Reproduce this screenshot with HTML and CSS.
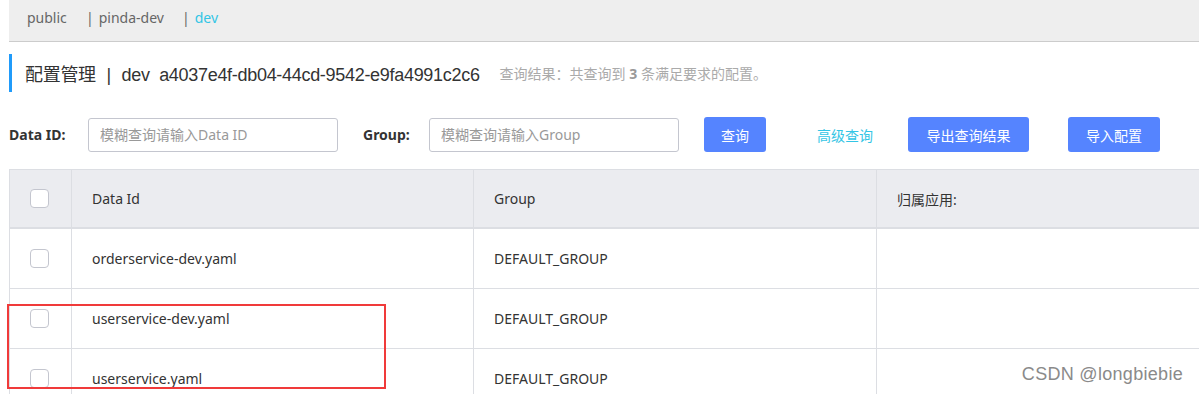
FILE: index.html
```html
<!DOCTYPE html>
<html lang="zh-CN">
<head>
    <meta charset="UTF-8">
    <title>配置管理</title>
    <link rel="stylesheet" href="styles.css">
</head>
<body>
    <div class="page">
        <div class="ns-bar">
            <span class="ns-item ns-first">public</span>
            <span class="ns-item ns-second"><span class="ns-sep">|</span>pinda-dev</span>
            <span class="ns-item"><span class="ns-sep">|</span><span class="active">dev</span></span>
        </div>

        <div class="title-row">
            <span class="title">配置管理 <span class="title-sep">|</span> dev&nbsp; a4037e4f-db04-44cd-9542-e9fa4991c2c6</span>
            <span class="title-result">查询结果：共查询到 <b>3</b> 条满足要求的配置。</span>
        </div>

        <div class="search-row">
            <label class="search-label">Data ID:</label>
            <input class="search-input" type="text" placeholder="模糊查询请输入Data ID">
            <label class="search-label group-label">Group:</label>
            <input class="search-input" type="text" placeholder="模糊查询请输入Group">
            <button class="btn btn-query">查询</button>
            <a class="link-adv">高级查询</a>
            <button class="btn btn-export">导出查询结果</button>
            <button class="btn btn-import">导入配置</button>
        </div>

        <table class="config-table">
            <thead>
                <tr>
                    <th class="col-check"><span class="checkbox"></span></th>
                    <th class="col-id">Data Id</th>
                    <th class="col-group">Group</th>
                    <th class="col-app">归属应用:</th>
                </tr>
            </thead>
            <tbody>
                <tr>
                    <td class="col-check"><span class="checkbox"></span></td>
                    <td>orderservice-dev.yaml</td>
                    <td>DEFAULT_GROUP</td>
                    <td></td>
                </tr>
                <tr>
                    <td class="col-check"><span class="checkbox"></span></td>
                    <td>userservice-dev.yaml</td>
                    <td>DEFAULT_GROUP</td>
                    <td></td>
                </tr>
                <tr>
                    <td class="col-check"><span class="checkbox"></span></td>
                    <td>userservice.yaml</td>
                    <td>DEFAULT_GROUP</td>
                    <td></td>
                </tr>
            </tbody>
        </table>

        <div class="highlight-box"></div>
        <div class="watermark">CSDN @longbiebie</div>
    </div>
</body>
</html>
```

FILE: styles.css
```css
body {
    margin: 0;
    padding: 0;
    font-family: 'Noto Sans', 'Noto Sans CJK SC', sans-serif;
    font-size: 14px;
    color: #333;
    background-color: #ffffff;
    overflow: hidden;
}

.page {
    position: relative;
    height: 394px;
    padding-left: 9px;
}

.ns-bar {
    height: 42px;
    box-sizing: border-box;
    background-color: #eeeeee;
    border-bottom: 1px solid #cccccc;
    display: flex;
    align-items: center;
    padding-left: 18px;
    padding-bottom: 7px;
    color: #666;
}

.ns-first {
    width: 59px;
}

.ns-second {
    width: 96px;
}

.ns-sep {
    color: #666;
    margin-right: 5px;
}

.active {
    color: #33c5e5;
}

.title-row {
    display: flex;
    align-items: center;
    margin-top: 12px;
    height: 38px;
    border-left: 3px solid #209bfa;
    padding-left: 13px;
}

.title {
    font-family: 'Liberation Sans', 'Noto Sans CJK SC', sans-serif;
    font-size: 18px;
    color: #333;
    letter-spacing: -0.3px;
}

.title-sep {
    margin: 0 6px;
}

.title-result {
    font-size: 14px;
    color: #aaaaaa;
    margin-left: 20px;
}

.title-result b {
    font-weight: bold;
    color: #999;
}

.search-row {
    display: flex;
    align-items: center;
    margin-top: 25px;
    height: 35px;
}

.search-label {
    font-weight: bold;
    font-size: 14px;
    color: #333;
    width: 79px;
}

.group-label {
    margin-left: 25px;
    width: 66px;
}

.search-input {
    width: 250px;
    height: 34px;
    box-sizing: border-box;
    border: 1px solid #c4c6cf;
    border-radius: 3px;
    padding: 0 11px;
    font-family: 'Noto Sans', 'Noto Sans CJK SC', sans-serif;
    font-size: 14px;
    color: #333;
}

.search-input::placeholder {
    color: #999;
}

.btn {
    height: 35px;
    border: none;
    border-radius: 3px;
    background-color: #5584ff;
    color: #ffffff;
    font-family: 'Noto Sans', 'Noto Sans CJK SC', sans-serif;
    font-size: 14px;
    padding: 0;
}

.btn-query {
    margin-left: 25px;
    width: 62px;
}

.link-adv {
    color: #33c5e5;
    margin-left: 51px;
}

.btn-export {
    margin-left: 35px;
    width: 121px;
}

.btn-import {
    margin-left: 39px;
    width: 92px;
}

.config-table {
    margin-top: 17px;
    border-collapse: collapse;
    width: 1260px;
    table-layout: fixed;
    border-left: 1px solid #dcdee3;
    border-top: 1px solid #dcdee3;
}

.config-table th {
    background-color: #ebecf0;
    font-weight: normal;
    text-align: left;
    height: 57px;
    border-bottom: 2px solid #dcdee3;
    border-right: 1px solid #dcdee3;
    padding: 0 0 0 20px;
    color: #333;
}

.config-table td {
    height: 59px;
    border-bottom: 1px solid #dcdee3;
    border-right: 1px solid #dcdee3;
    padding: 0 0 0 20px;
    color: #333;
}

.config-table .col-check {
    width: 62px;
    padding-left: 20px;
    box-sizing: border-box;
}

.config-table .col-id {
    width: 381px;
}

.config-table .col-group {
    width: 382px;
}

.checkbox {
    display: block;
    width: 17px;
    height: 17px;
    border: 1px solid #c4c6cf;
    border-radius: 4px;
    background-color: #ffffff;
}

.highlight-box {
    position: absolute;
    left: 7px;
    top: 304px;
    width: 375px;
    height: 81px;
    border: 2px solid #f03a3a;
}

.watermark {
    position: absolute;
    right: 16px;
    top: 364px;
    font-family: 'Liberation Sans', sans-serif;
    font-size: 18px;
    letter-spacing: 0.3px;
    color: #8a8a8a;
}
```
